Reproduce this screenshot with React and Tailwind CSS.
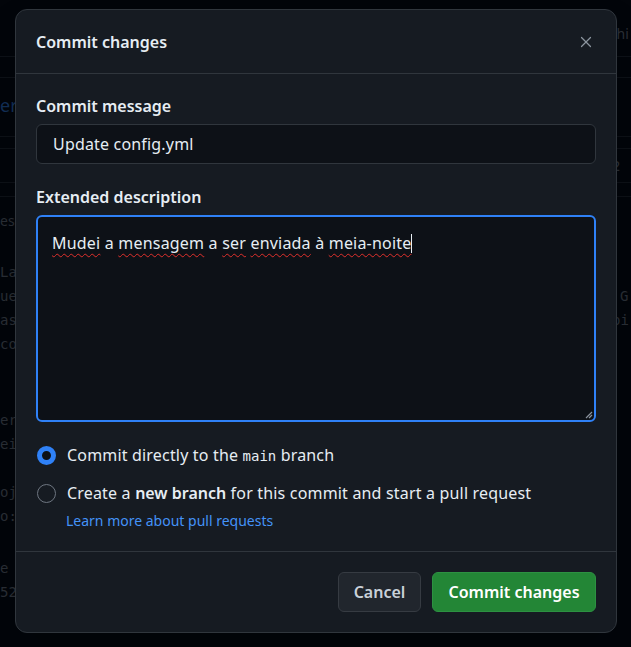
import { X } from "lucide-react";

const bgRows = [
  { top: 23, left: 608, text: "ghi", mono: false },
  { top: 92, left: 0, text: "er", mono: false, blue: true },
  { top: 92, left: 610, text: "s", mono: false },
  { top: 156, left: 612, text: "2", mono: true },
  { top: 210, left: 0, text: "es", mono: false },
  { top: 262, left: 0, text: "La", mono: true },
  { top: 286, left: 0, text: "ue", mono: true },
  { top: 286, left: 620, text: "G", mono: true },
  { top: 310, left: 0, text: "as", mono: true },
  { top: 310, left: 612, text: "pi", mono: true },
  { top: 334, left: 0, text: "co", mono: true },
  { top: 410, left: 0, text: "er", mono: true },
  { top: 434, left: 0, text: "ei", mono: true },
  { top: 482, left: 0, text: "oj", mono: true },
  { top: 506, left: 0, text: "o:", mono: true },
  { top: 558, left: 0, text: "e", mono: true },
  { top: 582, left: 0, text: "52", mono: true },
];

const bgLines = [56, 77, 136, 148, 182, 196];

function Radio({ checked }) {
  return checked ? (
    <span className="w-[19px] h-[19px] rounded-full border-[5px] border-[#2f81f7] bg-[#0d1117] shrink-0" />
  ) : (
    <span className="w-[19px] h-[19px] rounded-full border border-[#6e7681] shrink-0" />
  );
}

function Typo({ children }) {
  return (
    <span className="underline decoration-wavy decoration-[#e0302c] decoration-1 underline-offset-[4px]">
      {children}
    </span>
  );
}

export default function App() {
  return (
    <div
      className="relative w-[631px] h-[647px] overflow-hidden bg-[#02050a] text-[#e6edf3]"
      style={{ fontFamily: "'Noto Sans', 'Open Sans', sans-serif" }}
    >
      {/* dimmed page behind the dialog */}
      {bgLines.map((y) => (
        <div key={y} className="absolute left-0 right-0 h-px bg-[#0d1117]" style={{ top: y }} />
      ))}
      {bgRows.map((r, i) => (
        <div
          key={i}
          className={`absolute text-[14px] whitespace-nowrap ${r.blue ? "text-[#123058] text-[18px]" : "text-[#2a2f36]"}`}
          style={{
            top: r.top,
            left: r.left,
            fontFamily: r.mono ? "'DejaVu Sans Mono', monospace" : "'Noto Sans', sans-serif",
          }}
        >
          {r.text}
        </div>
      ))}

      {/* dialog */}
      <div className="absolute left-[15px] top-[9px] w-[602px] h-[624px] flex flex-col rounded-[12px] border border-[#30363d] bg-[#161b22] shadow-2xl">
        <div className="h-[64px] flex items-center justify-between px-5 border-b border-[#30363d] shrink-0">
          <h1 className="text-[16px] font-semibold">Commit changes</h1>
          <X size={18} strokeWidth={1.6} className="text-[#8b949e] mr-[1px]" />
        </div>

        <div className="px-5 pt-5 pb-5 flex flex-col border-b border-[#30363d]">
          <label className="text-[16px] font-semibold leading-6">Commit message</label>
          <div className="mt-1.5 h-[40px] flex items-center px-4 rounded-[6px] border border-[#30363d] bg-[#0d1117] text-[16px] tracking-[0.18px]">
            Update config.yml
          </div>

          <label className="mt-[21px] text-[16px] font-semibold leading-6">Extended description</label>
          <div className="relative mt-1.5 h-[207px] rounded-[6px] border-2 border-[#2f81f7] bg-[#0d1117] px-[14px] pt-[14px] text-[16px] leading-6 tracking-[0.2px]">
            <Typo>Mudei</Typo> a <Typo>mensagem</Typo> a <Typo>ser</Typo> <Typo>enviada</Typo> à{" "}
            <Typo>meia-noite</Typo>
            <span className="inline-block w-px h-[19px] bg-[#e6edf3] align-middle -mt-[3px]" />
            <svg className="absolute right-[1px] bottom-[1px]" width="9" height="9" viewBox="0 0 9 9">
              <path d="M8 2 L2 8 M8 5 L5 8" stroke="#8b949e" strokeWidth="1.2" />
            </svg>
          </div>

          <div className="mt-[21px] flex items-center gap-[11px] text-[16px] leading-6 pl-[1px] tracking-[0.18px]">
            <Radio checked />
            <span>
              Commit directly to the{" "}
              <span className="text-[14px] tracking-normal" style={{ fontFamily: "'DejaVu Sans Mono', monospace" }}>
                main
              </span>{" "}
              branch
            </span>
          </div>
          <div className="mt-[13px] flex items-center gap-[11px] text-[16px] leading-6 pl-[1px] tracking-[0.18px]">
            <Radio />
            <span>
              Create a <b className="font-semibold tracking-normal">new branch</b> for this commit and start a pull request
            </span>
          </div>
          <a className="mt-1.5 ml-[30px] text-[14px] leading-5 text-[#4493f8]">Learn more about pull requests</a>
        </div>

        <div className="flex-1 flex justify-end items-start gap-[11px] px-5 pt-5">
          <button className="h-[40px] w-[83px] rounded-[6px] border border-[#363b42] bg-[#21262d] text-[16px] font-semibold text-[#c9d1d9]">
            Cancel
          </button>
          <button className="h-[40px] w-[164px] rounded-[6px] border border-[#2d9142] bg-[#238636] text-[16px] font-semibold text-white">
            Commit changes
          </button>
        </div>
      </div>
    </div>
  );
}
